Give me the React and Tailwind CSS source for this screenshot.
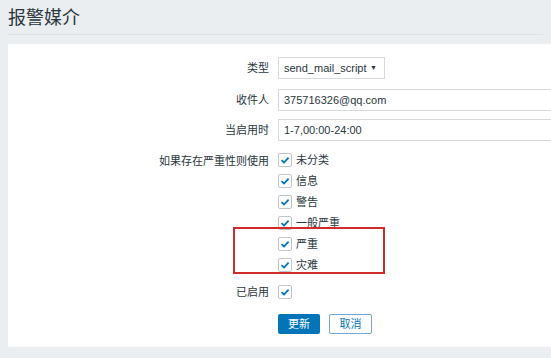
const levels = ["未分类", "信息", "警告", "一般严重", "严重", "灾难"];

function Check() {
  return (
    <span className="flex h-[14px] w-[14px] items-center justify-center rounded-[2px] border border-[#bfc5c9] bg-white">
      <svg width="10" height="10" viewBox="0 0 10 10">
        <path d="M1.5 5.2 L4 7.5 L8.6 2.6" fill="none" stroke="#0275b8" strokeWidth="1.8" />
      </svg>
    </span>
  );
}

function Row({ label, children, className = "" }) {
  return (
    <div className={`flex ${className}`}>
      <div className="w-[262px] shrink-0 pr-[1px] text-right leading-[22px]">{label}</div>
      <div className="ml-[8px]">{children}</div>
    </div>
  );
}

export default function App() {
  return (
    <div
      className="h-[358px] w-[551px] overflow-hidden bg-[#ebeef0] text-[11px] text-[#2a363d]"
      style={{ fontFamily: '"Liberation Sans", Arial, "Noto Sans CJK SC", sans-serif' }}
    >
      <div className="mx-[8px] h-[35px] border-b border-[#dde2e5] text-[18px] leading-[36px]">报警媒介</div>
      <div className="relative ml-[8px] mt-[9px] h-[303px] w-[600px] bg-white pt-[13px]">
        <Row label="类型">
          <div className="flex h-[22px] w-[107px] items-center justify-between border border-[#d6dadd] pl-[5px] pr-[7px]">
            <span>send_mail_script</span>
            <span className="text-[7px]">▼</span>
          </div>
        </Row>
        <Row label="收件人" className="mt-[10px]">
          <div className="flex h-[22px] w-[300px] items-center border border-[#d6dadd] px-[5px]">375716326@qq.com</div>
        </Row>
        <Row label="当启用时" className="mt-[8px]">
          <div className="flex h-[22px] w-[300px] items-center border border-[#d6dadd] px-[5px]">1-7,00:00-24:00</div>
        </Row>
        <div className="mt-[12px] flex">
          <div className="w-[262px] shrink-0 pr-[1px] text-right leading-[16px]">如果存在严重性则使用</div>
          <div className="ml-[8px] flex flex-col">
            {levels.map((l) => (
              <div key={l} className="flex h-[21px] items-start gap-[4px]">
                <Check />
                <span className="leading-[15px]">{l}</span>
              </div>
            ))}
          </div>
        </div>
        <div className="mt-[6px] flex">
          <div className="w-[262px] shrink-0 pr-[1px] text-right leading-[14px]">已启用</div>
          <div className="ml-[8px]">
            <Check />
          </div>
        </div>
        <div className="ml-[270px] mt-[15px] flex gap-[9px]">
          <button className="h-[20px] w-[42px] rounded-[2px] bg-[#0275b8] text-white">更新</button>
          <button className="h-[20px] w-[43px] rounded-[2px] border border-[#6fa8d6] bg-white text-[#0275b8]">取消</button>
        </div>
        <div className="absolute left-[225px] top-[183px] h-[47px] w-[152px] border-2 border-[#d22b2b]" />
      </div>
    </div>
  );
}
